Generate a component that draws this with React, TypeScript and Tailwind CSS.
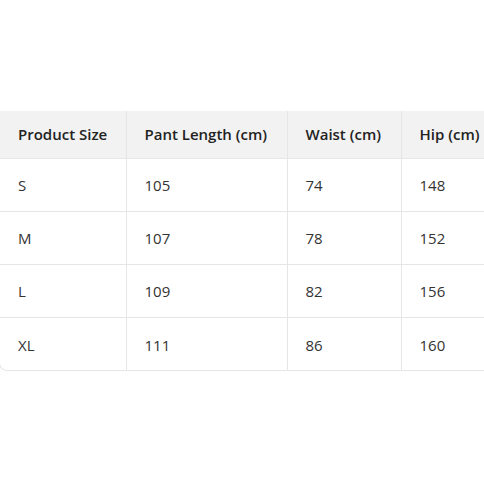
const rows = [
  { size: "S", length: "105", waist: "74", hip: "148" },
  { size: "M", length: "107", waist: "78", hip: "152" },
  { size: "L", length: "109", waist: "82", hip: "156" },
  { size: "XL", length: "111", waist: "86", hip: "160" },
];

const headers = ["Product Size", "Pant Length (cm)", "Waist (cm)", "Hip (cm)"];

export default function App() {
  return (
    <div
      className="w-[484px] h-[484px] overflow-hidden bg-white pt-[111px]"
      style={{ fontFamily: '"Open Sans", "Noto Sans", sans-serif' }}
    >
      <div className="ml-[-1px] w-[560px] rounded-b-lg border border-t-0 border-[#e6e6e6] overflow-hidden">
        <table className="w-full border-collapse text-[15px]">
          <thead>
            <tr className="bg-[#f2f2f2] h-[47px]">
              {headers.map((h, i) => (
                <th
                  key={h}
                  className={
                    "text-left font-semibold text-[#222] pl-[18px] pb-[1px] border-b border-[#e6e6e6] " +
                    (i > 0 ? "border-l " : "") +
                    (i === 0 ? "w-[126px]" : i === 1 ? "w-[161px]" : i === 2 ? "w-[114px]" : "")
                  }
                >
                  {h}
                </th>
              ))}
            </tr>
          </thead>
          <tbody>
            {rows.map((r, idx) => (
              <tr
                key={r.size}
                className={"h-[53px] " + (idx < rows.length - 1 ? "border-b border-[#e6e6e6]" : "")}
              >
                <td className="pl-[18px] pt-[2px] text-[#333]">{r.size}</td>
                <td className="pl-[18px] pt-[2px] text-[#333] border-l border-[#e6e6e6]">{r.length}</td>
                <td className="pl-[18px] pt-[2px] text-[#333] border-l border-[#e6e6e6]">{r.waist}</td>
                <td className="pl-[18px] pt-[2px] text-[#333] border-l border-[#e6e6e6]">{r.hip}</td>
              </tr>
            ))}
          </tbody>
        </table>
      </div>
    </div>
  );
}
